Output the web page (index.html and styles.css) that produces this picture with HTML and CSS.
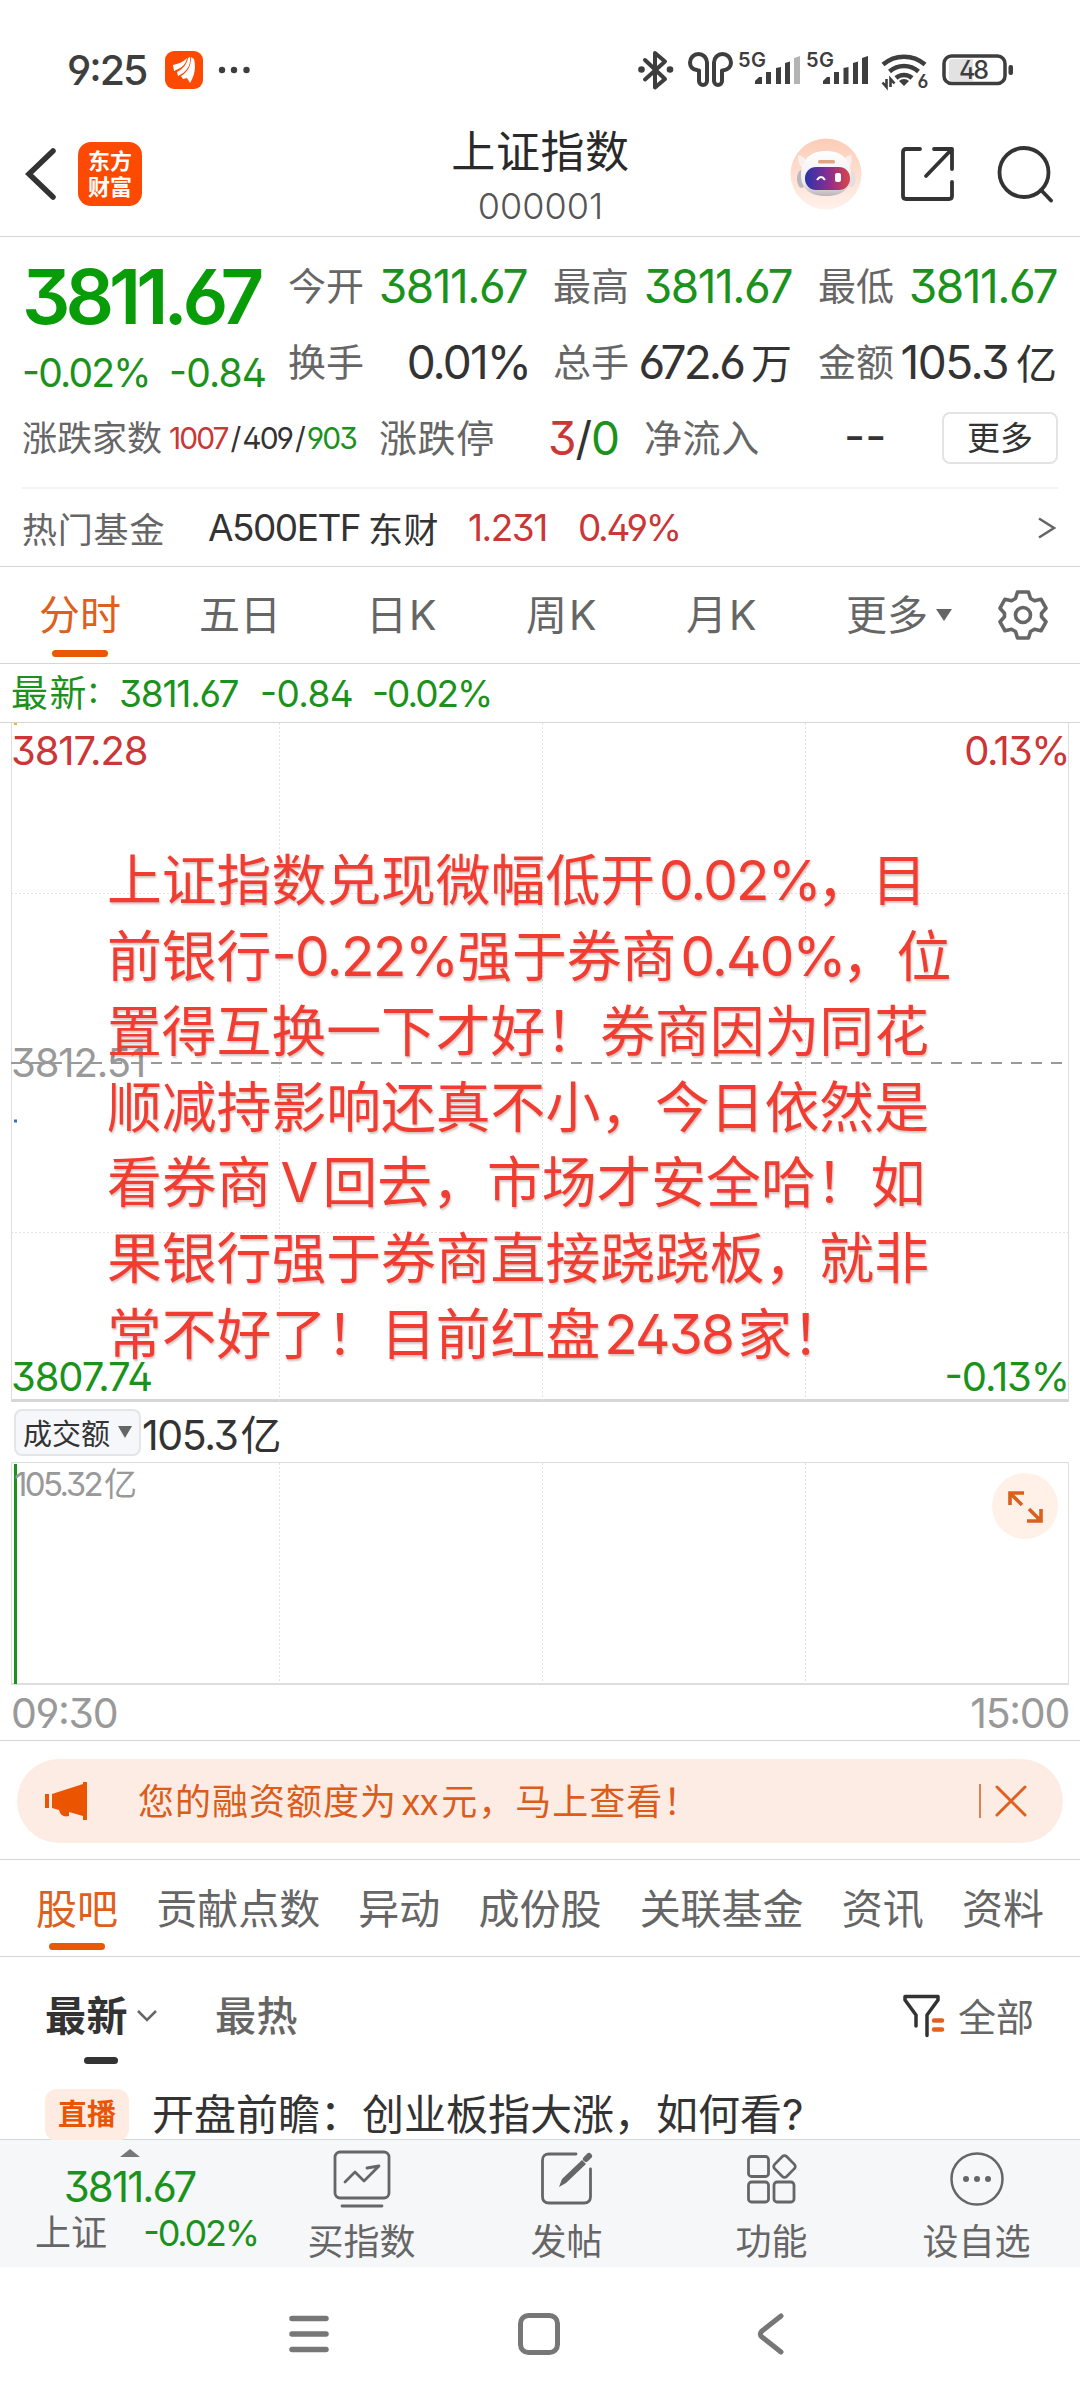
FILE: index.html
```html
<!DOCTYPE html>
<html lang="zh-CN">
<head>
<meta charset="utf-8">
<title>上证指数 000001</title>
<link rel="stylesheet" href="styles.css">
</head>
<body>
<div class="screen">

<div class="status">
  <span class="clock">9:25</span>
  <svg class="status-app" width="38" height="38" viewBox="0 0 38 38"><rect width="38" height="38" rx="9" fill="#fc4a02"/><path d="M8 14c5-1 10-3 14-7-1 6-5 10-13 13z" fill="#fff"/><path d="M23 7l2-1c1 8-3 15-12 19l-1-4c6-3 10-8 11-14z" fill="#fff"/><path d="M26 6l3 2c2 8 1 16-4 24l-3-5-4 1-2-3c7-4 10-10 10-19z" fill="#fff"/></svg>
  <svg class="status-dots" width="32" height="10" viewBox="0 0 32 10" fill="#3e3e3e"><circle cx="4" cy="5" r="3.2"/><circle cx="16" cy="5" r="3.2"/><circle cx="28.500" cy="5" r="3.2"/></svg>
  <svg class="status-icons" width="380" height="44" viewBox="636 48 380 44" fill="none" stroke="#3e3e3e">
    <path d="M645 60l20 19-10 8.500V53l10 8.500-20 18" stroke-width="4" stroke-linejoin="round" stroke-linecap="round"/>
    <circle cx="641.500" cy="69.500" r="3.300" fill="#3e3e3e" stroke="none"/><circle cx="670" cy="69.500" r="3.300" fill="#3e3e3e" stroke="none"/>
    <path d="M697 70q-7-1-7-7.500a8.500 8.500 0 0 1 17 0V81a4 4 0 0 1-8 0V70.500M722 70.500V81a4 4 0 0 1-8 0V62.500a8.500 8.500 0 0 1 17 0q0 6.500-8 8" stroke-width="4" stroke-linecap="round"/>
    <g stroke="none" fill="#3e3e3e" class="svg-label">
      <text x="738" y="66.500" font-size="20" textLength="28">5G</text><text x="806" y="66.500" font-size="20" textLength="28">5G</text>
      <path d="M755 84v-3l4-4h3v7zM766 84V72h5v12zM776 84V68l5-1v17zM785 84V63l5-1.500V84z"/><path d="M794 84V58l6-2v28z" fill="#b4b4b4"/>
      <path d="M823 84v-3l4-4h3v7zM834 84V72h5v12zM843.500 84V68l5-1v17zM853 84V63l5-1.500V84zM862 84V58l6-2v28z"/>
      <text x="917.500" y="88" font-size="18">6</text>
    </g>
    <path d="M883 64.500a32 32 0 0 1 42 0M889.500 71.500a22 22 0 0 1 29 0M896 78a12 12 0 0 1 16 0" stroke-width="4.500"/>
    <path d="M899 81a7 7 0 0 1 10 0l-5 5z" fill="#3e3e3e" stroke="none"/>
    <path d="M886.500 79v8l-4-4.500M890.500 87v-8l4 4.500" stroke-width="2.600"/>
    <rect x="944" y="56" width="61" height="27.500" rx="7.500" stroke-width="3.500"/>
    <path d="M949 62q0-3 3-3h21v22h-21q-3 0-3-3z" fill="#e2e2e2" stroke="none"/>
    <rect x="1008.500" y="65" width="4.500" height="10" rx="2" fill="#3e3e3e" stroke="none"/>
    <text x="959" y="78.500" font-size="25" textLength="30" fill="#3e3e3e" stroke="none" class="battery-label">48</text>
  </svg>
</div>

<header class="topbar">
  <svg class="back" width="36" height="56" viewBox="0 0 36 56" fill="none" stroke="#333" stroke-width="5.500"><path d="M31 5L7 28l24 23" stroke-linecap="round"/></svg>
  <div class="logo"><span>东方</span><span>财富</span></div>
  <div class="title"><h1>上证指数</h1><p>000001</p></div>
  <svg class="bot" width="72" height="72" viewBox="0 0 72 72">
    <defs><linearGradient id="halo" x1="0" y1="0" x2="0" y2="1"><stop offset="0" stop-color="#fcccb6"/><stop offset="1" stop-color="#fff1eb"/></linearGradient>
    <linearGradient id="visor"><stop offset="0" stop-color="#2b33ab"/><stop offset=".55" stop-color="#8c2f8d"/><stop offset="1" stop-color="#dd4545"/></linearGradient>
    <linearGradient id="shell" x1="0" y1="0" x2="0" y2="1"><stop offset="0" stop-color="#fff"/><stop offset=".7" stop-color="#f0ecef"/><stop offset="1" stop-color="#b9b4b9"/></linearGradient></defs>
    <circle cx="36" cy="36" r="35.500" fill="url(#halo)"/>
    <path d="M8 17q5 1 8 5l-3 8q-6-4-5-13zM61 17q-5 1-8 5l4 8q7-4 4-13z" fill="#f7eff0"/>
    <ellipse cx="11.500" cy="41" rx="4.500" ry="9" fill="#bdb6bb"/><ellipse cx="61" cy="41" rx="4.500" ry="8" fill="#e5dde1"/>
    <path d="M36 13c17 0 25 10 25 24s-9 21-25 21-25-7-25-21 8-24 25-24z" fill="url(#shell)"/>
    <rect x="28" y="22" width="17" height="3.500" rx="1.500" fill="#dda887"/>
    <rect x="15" y="29" width="45" height="23" rx="11" fill="url(#visor)"/>
    <path d="M27 42q4-6 8 0" fill="none" stroke="#fff" stroke-width="2"/><rect x="45" y="35" width="6" height="9" rx="2" fill="#fff"/>
  </svg>
  <svg class="share" width="56" height="58" viewBox="0 0 56 58" fill="none" stroke="#333" stroke-width="3.800" stroke-linecap="round" stroke-linejoin="round"><path d="M20 4H6Q3 4 3 7v44q0 3 3 3h43q3 0 3-3V37M34 4h18v20M52 4L26 31"/></svg>
  <svg class="search" width="58" height="58" viewBox="0 0 58 58" fill="none" stroke="#333" stroke-width="3.800" stroke-linecap="round"><circle cx="28" cy="27.500" r="24.500"/><path d="M45 45l10 10.500"/></svg>
</header>

<section class="quote">
  <div class="quote-top">
    <div class="price">
      <div class="last">3811.67</div>
      <div class="change"><span class="change-rate">-0.02%</span><span>-0.84</span></div>
    </div>
    <dl class="stats">
      <div><dt>今开</dt><dd class="down">3811.67</dd></div>
      <div><dt>最高</dt><dd class="down">3811.67</dd></div>
      <div><dt>最低</dt><dd class="down">3811.67</dd></div>
      <div><dt>换手</dt><dd class="turnover">0.01%</dd></div>
      <div><dt>总手</dt><dd class="unit-value hands">672.6<small>万</small></dd></div>
      <div><dt>金额</dt><dd class="unit-value">105.3<small>亿</small></dd></div>
    </dl>
  </div>
  <div class="breadth">
    <span class="breadth-label">涨跌家数</span>
    <span class="breadth-count"><b class="up">1007</b><i>/</i><b>409</b><i>/</i><b class="down">903</b></span>
    <span class="stat-label limit">涨跌停</span>
    <span class="limit-count"><b class="up">3</b>/<b class="down">0</b></span>
    <span class="stat-label inflow">净流入</span>
    <span class="inflow-value">--</span>
    <button class="more-button">更多</button>
  </div>
  <div class="fund">
    <span class="fund-label">热门基金</span>
    <span class="fund-name">A500ETF</span><span class="fund-cjk">东财</span>
    <span class="fund-price up">1.231</span>
    <span class="fund-rate up">0.49%</span>
    <svg class="fund-arrow" width="18" height="22" viewBox="0 0 18 22" fill="none" stroke="#666" stroke-width="2.600"><path d="M1 1.500L16 11 1 20.500"/></svg>
  </div>
</section>

<nav class="periods">
  <a class="active">分时</a><a class="five">五日</a><a class="k">日K</a><a class="k">周K</a><a class="k">月K</a>
  <a class="period-more">更多<svg width="16" height="12" viewBox="0 0 16 12"><path d="M0 0h16L8 12z" fill="#666"/></svg></a>
  <svg class="gear" width="52" height="52" viewBox="-26 -26 52 52" fill="none" stroke="#666" stroke-width="3.600" stroke-linejoin="round"><path d="M-5.500-23h11l2 6.500 4 2.300 6.500-1.600 5 9-4.500 5v3.600l4.500 5-5 9-6.500-1.600-4 2.300-2 6.500h-11l-2-6.500-4-2.300-6.500 1.600-5-9 4.500-5V-1.800l-4.500-5 5-9 6.500 1.600 4-2.300z"/><circle r="7.500"/></svg>
</nav>

<div class="latest down"><span class="latest-label">最新:</span><span class="latest-price">3811.67</span><span class="latest-diff">-0.84</span><span>-0.02%</span></div>

<section class="chart">
  <svg class="grid-lines" width="1058" height="679" viewBox="0 0 1058 679" fill="none">
    <path d="M268.500 0v678M531.500 0v678M794.500 0v678M0 170.500h1058M0 509.500h1058" stroke="#e2e2e2" stroke-dasharray="2 2"/>
    <path d="M0 340h1052" stroke="#999" stroke-width="2" stroke-dasharray="11 9"/>
    <path d="M3 .500h3" stroke="#f0b429" stroke-width="3"/><path d="M3 398h3" stroke="#3d6fa8" stroke-width="3"/>
  </svg>
  <span class="axis top up">3817.28</span><span class="axis top right up">0.13%</span>
  <span class="axis mid">3812.51</span>
  <span class="axis bottom down">3807.74</span><span class="axis bottom right down">-0.13%</span>
  <div class="note">
    <p>上证指数兑现微幅低开<span class="num pct">0.02%</span>，目</p>
    <p>前银行<span class="num minus">-0.22%</span>强于券商<span class="num pct">0.40%</span>，位</p>
    <p>置得互换一下才好！券商因为同花</p>
    <p>顺减持影响还真不小，今日依然是</p>
    <p>看券商<span class="num letter">V</span>回去，市场才安全哈！如</p>
    <p>果银行强于券商直接跷跷板，就非</p>
    <p>常不好了！目前红盘<span class="num">2438</span>家！</p>
  </div>
</section>

<div class="volume-head">
  <button class="chip"><span>成交额</span><svg width="14" height="12" viewBox="0 0 14 12"><path d="M0 0h14L7 12z" fill="#666"/></svg></button>
  <span class="volume-now">105.3<small>亿</small></span>
</div>
<section class="volume">
  <svg class="grid-lines" width="1058" height="221" viewBox="0 0 1058 221" fill="none"><path d="M268.500 0v220M531.500 0v220M794.500 0v220" stroke="#e2e2e2" stroke-dasharray="2 2"/><path d="M4.500 1v220" stroke="#1d911d" stroke-width="3"/></svg>
  <span class="volume-max">105.32<small>亿</small></span>
  <svg class="expand" width="66" height="66" viewBox="0 0 66 66" fill="none" stroke="#d9601f" stroke-width="3.600"><circle cx="33" cy="33" r="33" fill="#fff0e8" stroke="none"/><path d="M18 32V20h14M18.500 20.500L30 32M49 36v12H35M48.500 47.500L37 36"/></svg>
</section>
<div class="times"><span>09:30</span><span>15:00</span></div>

<div class="promo-wrap"><div class="promo">
  <svg class="horn" width="44" height="38" viewBox="0 0 44 38" fill="#eb5502"><path d="M1 12h4v14H1zM8 12L39 2V0h4v38h-4v-4l-14-4v4q-8 2-10-6l-7-2z"/></svg>
  <span class="promo-text">您的融资额度为<span class="xx">xx</span>元，马上查看！</span>
  <i class="promo-bar"></i>
  <svg class="close" width="32" height="32" viewBox="0 0 32 32" fill="none" stroke="#e0611f" stroke-width="3" stroke-linecap="round"><path d="M2 2l28 28M30 2L2 30"/></svg>
</div></div>

<nav class="sections">
  <a class="active">股吧</a><a>贡献点数</a><a>异动</a><a>成份股</a><a>关联基金</a><a>资讯</a><a>资料</a>
</nav>

<section class="feed">
  <div class="sorts">
    <a class="sort active">最新</a>
    <svg class="caret" width="20" height="14" viewBox="0 0 20 14" fill="none" stroke="#666" stroke-width="2.500"><path d="M1 2l9 9 9-9"/></svg>
    <a class="sort hot">最热</a>
    <svg class="filter" width="42" height="44" viewBox="0 0 42 44" fill="none" stroke="#333" stroke-width="3.500" stroke-linejoin="round" stroke-linecap="round"><path d="M13 32V21L2 6V2.500h33V6L24 21v20.500"/><path d="M31 26.500h8M31 35.500h8" stroke="#e2611f" stroke-width="4.500"/></svg>
    <span class="all">全部</span>
  </div>
  <div class="post"><span class="live">直播</span><span class="post-title">开盘前瞻：创业板指大涨，如何看?</span></div>
</section>

<nav class="dock">
  <div class="dock-index">
    <svg width="20" height="8" viewBox="0 0 20 8"><path d="M0 8h20L10 0z" fill="#777"/></svg>
    <div class="dock-price down">3811.67</div>
    <div class="dock-row"><span>上证</span><span class="dock-rate down">-0.02%</span></div>
  </div>
  <a><svg width="60" height="60" viewBox="0 0 60 60" fill="none" stroke="#666" stroke-width="2.800" stroke-linecap="round" stroke-linejoin="round"><rect x="3" y="3" width="54" height="46" rx="5"/><path d="M10 57h40M13 33l10-10 9 9 15-15M35 19l12-2"/></svg><span>买指数</span></a>
  <a><svg width="60" height="60" viewBox="0 0 60 60" fill="none" stroke="#666" stroke-width="2.800" stroke-linecap="round"><path d="M39 5H12Q5.500 5 5.500 11.500v36Q5.500 54 12 54h35q6.500 0 6.500-6.500V20"/><path d="M22 38l3-8 20-19 4 4-20 19z" fill="#666" stroke="none"/><path d="M49 10l3-3" stroke-width="6"/></svg><span>发帖</span></a>
  <a><svg width="60" height="60" viewBox="0 0 60 60" fill="none" stroke="#666" stroke-width="2.800" stroke-linejoin="round"><rect x="6.500" y="7.500" width="20" height="20" rx="3"/><rect x="6.500" y="33" width="20" height="20" rx="3"/><rect x="32" y="33" width="20" height="20" rx="3"/><rect x="34" y="9" width="17" height="17" rx="3" transform="rotate(45 42.500 17.500)"/></svg><span>功能</span></a>
  <a><svg width="60" height="60" viewBox="0 0 60 60" fill="none" stroke="#666" stroke-width="2.500"><circle cx="30" cy="30" r="25.500"/><g fill="#666" stroke="none"><circle cx="19" cy="30" r="3"/><circle cx="30" cy="30" r="3"/><circle cx="41" cy="30" r="3"/></g></svg><span>设自选</span></a>
</nav>

<div class="system-nav">
  <svg width="40" height="44" viewBox="0 0 40 44" stroke="#777" stroke-width="5.500" stroke-linecap="round"><path d="M3 6.500h34M3 22h34M3 37.500h34"/></svg>
  <svg class="home" width="44" height="44" viewBox="0 0 44 44" fill="none" stroke="#777" stroke-width="5"><rect x="3.500" y="3.500" width="37" height="37" rx="8"/></svg>
  <svg width="28" height="44" viewBox="0 0 28 44" fill="none" stroke="#777" stroke-width="5" stroke-linecap="round"><path d="M24 4L5 19q-3.500 3 0 6l19 15"/></svg>
</div>
</div>
</body>
</html>
```
FILE: styles.css
```css
* { box-sizing: border-box; }
body {
  margin: 0;
  background: #fff;
  color: #333;
  font-family: Inter, "Noto Sans CJK SC", sans-serif;
  font-feature-settings: "ss01", "cv09", "case";
}
h1, p, dl, dd, dt { margin: 0; font-weight: 400; }
b, i { font-weight: inherit; font-style: normal; }
small { font-size: inherit; letter-spacing: 0; }
svg { display: block; flex: none; }
button { font-family: inherit; padding: 0; }
.screen { width: 1080px; height: 2400px; overflow: hidden; display: flex; flex-direction: column; white-space: nowrap; }
.up { color: #cb3636; }
.down { color: #1b921b; }
.svg-label { font-weight: 600; }
.battery-label { font-weight: 500; }

.status { height: 120px; display: flex; align-items: center; padding: 20px 64px 0 67px; }
.clock { font-size: 41px; font-weight: 500; color: #3e3e3e; width: 98px; letter-spacing: -2px; }
.status-dots { margin-left: 15px; }
.status-icons { margin-left: auto; }

.topbar { height: 117px; display: flex; align-items: center; padding: 0 26px 9px 22px; border-bottom: 1px solid #d6d6d6; }
.logo { width: 64px; height: 64px; margin-left: 20px; border-radius: 13px; background: #fc4a02; color: #fff; font-size: 22px; font-weight: 700; line-height: 26px; display: flex; flex-direction: column; align-items: center; justify-content: center; }
.title { flex: 1; text-align: center; padding-left: 149px; padding-top: 4px; }
.title h1 { font-size: 44px; line-height: 60px; color: #2a2a2a; letter-spacing: .6px; }
.title p { font-size: 36px; line-height: 48px; font-weight: 300; color: #555; }
.share { margin-left: 38px; }
.search { margin-left: 40px; }

.quote { height: 330px; padding: 0 22px; border-bottom: 1px solid #d6d6d6; }
.quote-top { height: 163px; display: flex; }
.price { width: 267px; padding-top: 21px; }
.last { font-size: 76px; line-height: 76px; font-weight: 600; color: #089c08; letter-spacing: -5px; }
.change { font-size: 39px; line-height: 78px; color: #1b921b; display: flex; letter-spacing: -.8px; }
.change-rate { width: 147px; letter-spacing: -1.8px; }
.stats { padding-top: 11px; display: grid; grid-template-columns: repeat(3, 240px); column-gap: 25px; grid-auto-rows: 76px; }
.stats > div { display: flex; justify-content: space-between; line-height: 76px; }
.stats dt, .stat-label { font-size: 38px; color: #666; }
.stats dd { font-size: 46px; letter-spacing: -1.5px; padding-right: 1px; }
.stats .turnover { letter-spacing: -1.9px; margin-right: -3px; }
.stats .hands { letter-spacing: -2.9px; }
.unit-value small { font-size: 41px; margin-left: 8px; }
.breadth { height: 76px; display: flex; align-items: center; line-height: 76px; }
.breadth-label { font-size: 35px; color: #666; width: 147px; }
.breadth-count { font-size: 30px; width: 210px; letter-spacing: -2px; }
.breadth-count i { margin: 0 3px; }
.limit { width: 169px; letter-spacing: .6px; }
.limit-count { font-size: 46px; width: 96px; letter-spacing: -1px; }
.inflow { width: 200px; letter-spacing: .6px; }
.inflow-value { font-size: 46px; }
.more-button { margin-left: auto; width: 116px; height: 52px; border: 2px solid #e3e3e3; border-radius: 8px; background: #fff; color: #333; font-size: 33px; line-height: 46px; }
.fund { margin-top: 11px; border-top: 2px solid #f3f3f3; height: 79px; display: flex; align-items: center; font-size: 37px; letter-spacing: -1.5px; }
.fund-label { font-size: 35px; color: #666; width: 186px; letter-spacing: .8px; }
.fund-name { width: 160px; }
.fund-cjk { font-size: 35px; width: 100px; letter-spacing: .6px; }
.fund-price { width: 110px; }
.fund-rate { letter-spacing: -2.3px; }
.fund-arrow { margin-left: auto; margin-right: 2px; }

.periods { height: 97px; border-bottom: 1px solid #d6d6d6; display: flex; align-items: center; padding-left: 39px; font-size: 41px; color: #666; }
.periods a { position: relative; width: 160px; line-height: 96px; }
.periods .five { width: 167px; }
.periods .k { width: 160px; letter-spacing: 2px; }
.periods .period-more { display: flex; align-items: center; gap: 8px; width: 151px; }
.active::after { content: ""; position: absolute; left: 13px; bottom: 6px; width: 56px; height: 7px; border-radius: 4px; background: #e75906; }
.periods .active, .sections .active { color: #df5f1c; }

.latest { height: 59px; line-height: 59px; font-size: 37px; border-bottom: 1px solid #d6d6d6; padding-left: 11px; display: flex; letter-spacing: -2px; }
.latest-label { width: 108px; letter-spacing: 1.5px; }
.latest-price { width: 141px; letter-spacing: -1.2px; }
.latest-diff { width: 112px; letter-spacing: -.6px; }

.chart { position: relative; height: 679px; margin: 0 11px; border: 1px solid #dedede; border-top: 0; border-bottom: 3px solid #d6d6d6; }
.grid-lines { position: absolute; left: -1px; top: 0; }
.axis { position: absolute; left: -1px; font-size: 40px; line-height: 48px; letter-spacing: -1.1px; }
.axis.right { left: auto; right: -1px; }
.axis.top { top: 4px; }
.axis.top.right { letter-spacing: -1.6px; }
.axis.mid { top: 316px; color: #999; }
.axis.bottom { bottom: -2px; }
.note { position: absolute; left: 95px; top: 120px; font-size: 54.800px; line-height: 75.600px; color: #f03c31; text-shadow: 1px 2px 2px rgba(120, 60, 50, .3); }
.num { letter-spacing: -1.7px; margin: 0 4px; }
.num.pct { margin-right: -3px; }
.num.minus { letter-spacing: -1.5px; margin: 0; }
.num.letter { margin: 0 6px 0 9px; }

.volume-head { height: 60px; display: flex; align-items: center; padding-left: 14px; }
.chip { width: 127px; height: 47px; border: 2px solid #e4e5e8; border-radius: 8px; background: #f6f7fa; color: #333; font-size: 29px; display: flex; align-items: center; gap: 8px; padding-left: 7px; }
.volume-now { font-size: 41px; margin-left: 1px; letter-spacing: -1.4px; }
.volume-now small { margin-left: 3px; }
.volume { position: relative; height: 223px; margin: 0 11px; border: 1px solid #dedede; border-bottom-width: 2px; }
.volume-max { position: absolute; left: 2px; top: 0; font-size: 33px; line-height: 43px; color: #999; letter-spacing: -2.6px; }
.volume-max small { margin-left: 3px; }
.expand { position: absolute; right: 10px; top: 10px; }
.times { height: 56px; border-bottom: 1px solid #d6d6d6; padding: 0 11px; display: flex; justify-content: space-between; font-size: 41px; line-height: 56px; color: #999; letter-spacing: -1.3px; }

.promo-wrap { height: 119px; padding: 18px 17px 0; border-bottom: 1px solid #d6d6d6; }
.promo { height: 84px; border-radius: 42px; background: #fcece4; display: flex; align-items: center; padding: 0 36px 0 27px; color: #db5c1b; font-size: 36px; }
.promo-text { margin-left: 50px; letter-spacing: 1px; line-height: 44px; padding-top: 1px; }
.xx { margin: 0 4px; letter-spacing: -1.5px; }
.promo-bar { width: 2px; height: 34px; background: #e08052; margin-left: auto; }
.close { margin-left: 14px; }

.sections { height: 97px; border-bottom: 1px solid #d6d6d6; display: flex; justify-content: space-between; padding: 0 36px; font-size: 41px; line-height: 98px; color: #666; }
.sections a { position: relative; }

.feed { height: 183px; border-bottom: 1px solid #d6d6d6; }
.sorts { display: flex; align-items: center; height: 118px; padding: 0 46px 0 45px; font-size: 41px; }
.sort { position: relative; line-height: 118px; color: #666; font-weight: 500; letter-spacing: .5px; }
.sort.active { font-weight: 700; color: #333; }
.sort.active::after { left: 39px; bottom: 11px; width: 34px; height: 7px; background: #333; }
.caret { margin-left: 9px; }
.hot { margin-left: 58px; }
.filter { margin-left: auto; }
.all { font-size: 38px; color: #666; margin-left: 13px; padding-bottom: 4px; }
.post { display: flex; align-items: center; padding: 14px 0 0 45px; }
.live { width: 84px; height: 52px; border-radius: 12px; background: #feece3; color: #ea5504; font-size: 29px; line-height: 52px; font-weight: 700; text-align: center; }
.post-title { font-size: 42px; line-height: 52px; margin-left: 23px; }

.dock { height: 127px; background: #f6f7f9; display: grid; grid-template-columns: 259px repeat(4, 205px); color: #666; font-size: 36px; }
.dock a { display: flex; flex-direction: column; align-items: center; line-height: 66px; padding-top: 9px; }
.dock-index { display: flex; flex-direction: column; align-items: center; padding-top: 9px; }
.dock-price { font-size: 42px; line-height: 60px; letter-spacing: -1.9px; }
.dock-row { display: flex; width: 259px; justify-content: space-between; padding: 0 1px 0 35px; line-height: 32px; }
.dock-rate { letter-spacing: -2.2px; }

.system-nav { height: 133px; display: flex; align-items: center; padding: 0 295px 0 289px; justify-content: space-between; }
.home { margin-right: 8px; }
```
